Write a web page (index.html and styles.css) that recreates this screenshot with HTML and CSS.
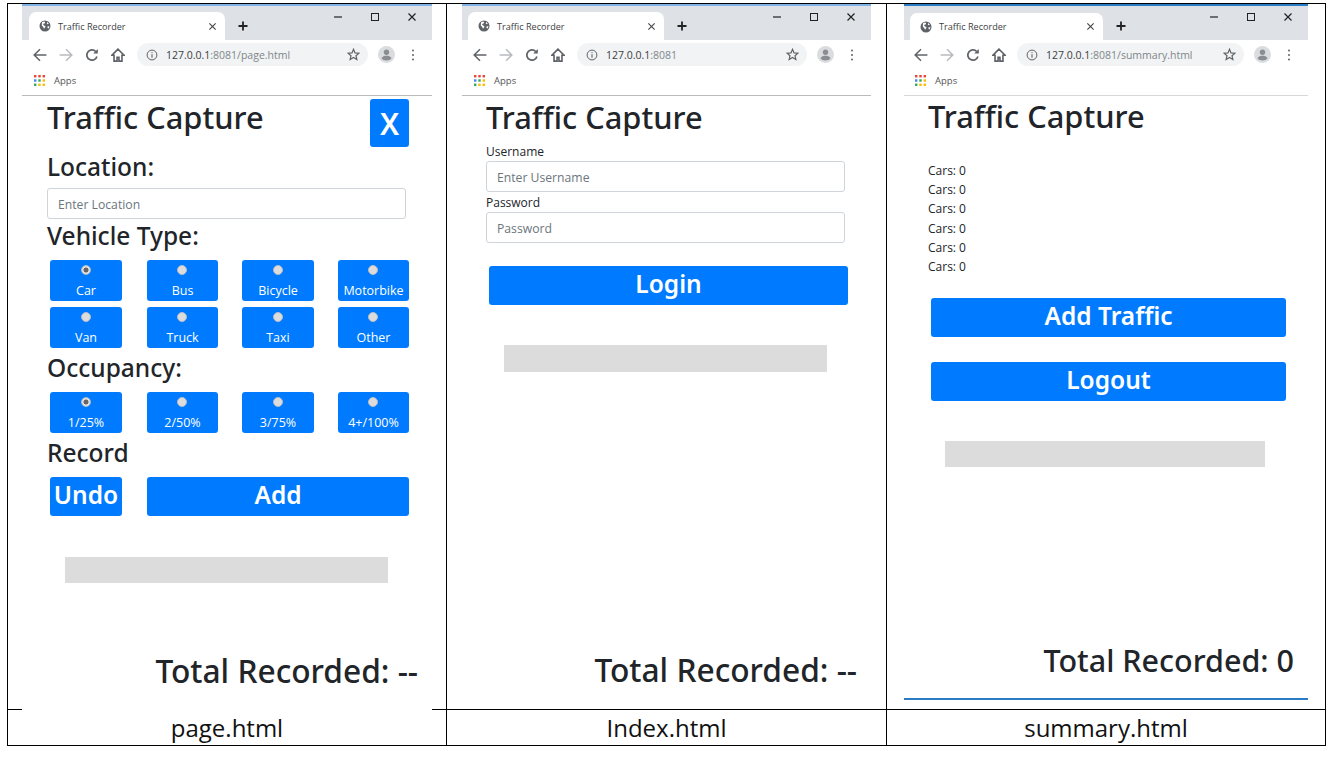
FILE: index.html
```html
<!DOCTYPE html>
<html lang="en">
<head>
<meta charset="utf-8">
<title>Traffic Recorder screens</title>
<link rel="stylesheet" href="styles.css">
</head>
<body>
<svg class="defs" aria-hidden="true">
  <symbol id="i-globe" viewBox="0 0 12 12"><circle cx="6" cy="6" r="5.500" fill="#5f6368"/><path d="M3 2.200l2-.7 1.200.6-.6 1.300-1.600.7.9 1.300 1.600.5-.5 1.700-1 1.100-.8-1.700-1.400-1.500zM8.300 2l1.500 1.700-1.200.6-.8-.9zM8.600 6.200l1.900.1-.8 2.300-1.200-.6z" fill="#fff"/></symbol>
  <symbol id="i-x" viewBox="0 0 10 10"><path d="M1.500 1.500l7 7M8.500 1.500l-7 7" fill="none" stroke="currentColor" stroke-width="1.200"/></symbol>
  <symbol id="i-plus" viewBox="0 0 10 10"><path d="M5 .5v9M.5 5h9" fill="none" stroke="currentColor" stroke-width="1.800"/></symbol>
  <symbol id="i-back" viewBox="0 0 12 12"><path d="M11.500 6H1.200M6 1L1 6l5 5" fill="none" stroke="currentColor" stroke-width="1.300"/></symbol>
  <symbol id="i-forward" viewBox="0 0 12 12"><path d="M.5 6h10.300M6 1l5 5-5 5" fill="none" stroke="currentColor" stroke-width="1.300"/></symbol>
  <symbol id="i-reload" viewBox="0 0 12 12"><path d="M10.200 7.200A4.400 4.400 0 1 1 9.200 3" fill="none" stroke="currentColor" stroke-width="1.500"/><path d="M11 .8v4H7z" fill="currentColor"/></symbol>
  <symbol id="i-home" viewBox="0 0 12 12"><path d="M6 1L.8 6.200h1.800v5h2.600V8h1.600v3.200h2.600v-5h1.800z" fill="none" stroke="currentColor" stroke-width="1.400"/></symbol>
  <symbol id="i-info" viewBox="0 0 12 12"><circle cx="6" cy="6" r="4.900" fill="none" stroke="currentColor" stroke-width="1"/><path d="M6 5.200v3.600M6 3.200v1" fill="none" stroke="currentColor" stroke-width="1.100"/></symbol>
  <symbol id="i-star" viewBox="0 0 12 12"><path d="M6 1.200l1.400 3.300 3.600.3-2.700 2.300.8 3.500L6 8.800l-3.100 1.800.8-3.500L1 4.800l3.600-.3z" fill="none" stroke="currentColor" stroke-width="1.100"/></symbol>
  <symbol id="i-avatar" viewBox="0 0 17 17"><circle cx="8.500" cy="8.500" r="8.500" fill="#dadce0"/><circle cx="8.500" cy="6.200" r="2.700" fill="#8a8d91"/><path d="M3.500 12.300c1-2 3-2.500 5-2.500s4 .5 5 2.500c-1 1.500-3 2.200-5 2.200s-4-.7-5-2.200z" fill="#8a8d91"/></symbol>
  <symbol id="i-dots" viewBox="0 0 4 12"><circle cx="2" cy="1.500" r="1" fill="#5f6368"/><circle cx="2" cy="6" r="1" fill="#5f6368"/><circle cx="2" cy="10.500" r="1" fill="#5f6368"/></symbol>
  <symbol id="i-apps" viewBox="0 0 11 11"><g><rect width="2.400" height="2.400" fill="#ea4335"/><rect x="4.300" width="2.400" height="2.400" fill="#ea4335"/><rect x="8.600" width="2.400" height="2.400" fill="#ea4335"/><rect y="4.300" width="2.400" height="2.400" fill="#4285f4"/><rect x="4.300" y="4.300" width="2.400" height="2.400" fill="#34a853"/><rect x="8.600" y="4.300" width="2.400" height="2.400" fill="#fbbc05"/><rect y="8.600" width="2.400" height="2.400" fill="#34a853"/><rect x="4.300" y="8.600" width="2.400" height="2.400" fill="#fbbc05"/><rect x="8.600" y="8.600" width="2.400" height="2.400" fill="#fbbc05"/></g></symbol>
  <symbol id="i-min" viewBox="0 0 10 10"><path d="M1 5h8" stroke="currentColor" stroke-width="1.200"/></symbol>
  <symbol id="i-max" viewBox="0 0 10 10"><rect x="1.500" y="1.500" width="7" height="7" fill="none" stroke="currentColor"/></symbol>
</svg>

<main class="sheet">
  <section class="cell cell-a">
    <div class="window win-a">
      <div class="tabstrip">
        <div class="tab"><svg class="ic-globe"><use href="#i-globe"/></svg><span class="tab-title">Traffic Recorder</span><svg class="ic-tabx"><use href="#i-x"/></svg></div>
        <svg class="ic-plus"><use href="#i-plus"/></svg>
        <div class="winctl"><svg class="ic-ctl"><use href="#i-min"/></svg><svg class="ic-ctl"><use href="#i-max"/></svg><svg class="ic-ctl"><use href="#i-x"/></svg></div>
      </div>
      <div class="toolbar">
        <svg class="ic-nav"><use href="#i-back"/></svg><svg class="ic-nav dim"><use href="#i-forward"/></svg><svg class="ic-nav"><use href="#i-reload"/></svg><svg class="ic-nav"><use href="#i-home"/></svg>
        <div class="omnibox"><svg class="ic-info"><use href="#i-info"/></svg><span class="url"><b>127.0.0.1</b>:8081/page.html</span><svg class="ic-star"><use href="#i-star"/></svg></div>
        <svg class="ic-avatar"><use href="#i-avatar"/></svg><svg class="ic-dots"><use href="#i-dots"/></svg>
      </div>
      <div class="bookmarks"><svg class="ic-apps"><use href="#i-apps"/></svg><span>Apps</span></div>
      <div class="page page-a">
        <header class="head">
          <h1 class="title">Traffic Capture</h1>
          <button class="btn btn-x">X</button>
        </header>
        <h2 class="sub sub-loc">Location:</h2>
        <input class="field field-loc" placeholder="Enter Location">
        <h2 class="sub sub-veh">Vehicle Type:</h2>
        <div class="choices">
          <label class="choice"><input class="radio" type="radio" name="veh" checked>Car</label>
          <label class="choice"><input class="radio" type="radio" name="veh">Bus</label>
          <label class="choice"><input class="radio" type="radio" name="veh">Bicycle</label>
          <label class="choice"><input class="radio" type="radio" name="veh">Motorbike</label>
          <label class="choice"><input class="radio" type="radio" name="veh">Van</label>
          <label class="choice"><input class="radio" type="radio" name="veh">Truck</label>
          <label class="choice"><input class="radio" type="radio" name="veh">Taxi</label>
          <label class="choice"><input class="radio" type="radio" name="veh">Other</label>
        </div>
        <h2 class="sub sub-occ">Occupancy:</h2>
        <div class="choices">
          <label class="choice"><input class="radio" type="radio" name="occ" checked>1/25%</label>
          <label class="choice"><input class="radio" type="radio" name="occ">2/50%</label>
          <label class="choice"><input class="radio" type="radio" name="occ">3/75%</label>
          <label class="choice"><input class="radio" type="radio" name="occ">4+/100%</label>
        </div>
        <h2 class="sub sub-rec">Record</h2>
        <div class="choices">
          <button class="btn btn-big">Undo</button>
          <button class="btn btn-big span3">Add</button>
        </div>
        <div class="ad ad-a"></div>
        <p class="total total-a">Total Recorded: --</p>
      </div>
    </div>
    <div class="caption">page.html</div>
  </section>

  <section class="cell cell-b">
    <div class="window win-b">
      <div class="tabstrip">
        <div class="tab"><svg class="ic-globe"><use href="#i-globe"/></svg><span class="tab-title">Traffic Recorder</span><svg class="ic-tabx"><use href="#i-x"/></svg></div>
        <svg class="ic-plus"><use href="#i-plus"/></svg>
        <div class="winctl"><svg class="ic-ctl"><use href="#i-min"/></svg><svg class="ic-ctl"><use href="#i-max"/></svg><svg class="ic-ctl"><use href="#i-x"/></svg></div>
      </div>
      <div class="toolbar">
        <svg class="ic-nav"><use href="#i-back"/></svg><svg class="ic-nav dim"><use href="#i-forward"/></svg><svg class="ic-nav"><use href="#i-reload"/></svg><svg class="ic-nav"><use href="#i-home"/></svg>
        <div class="omnibox"><svg class="ic-info"><use href="#i-info"/></svg><span class="url"><b>127.0.0.1</b>:8081</span><svg class="ic-star"><use href="#i-star"/></svg></div>
        <svg class="ic-avatar"><use href="#i-avatar"/></svg><svg class="ic-dots"><use href="#i-dots"/></svg>
      </div>
      <div class="bookmarks"><svg class="ic-apps"><use href="#i-apps"/></svg><span>Apps</span></div>
      <div class="page page-b">
        <h1 class="title">Traffic Capture</h1>
        <label class="lbl lbl-first" for="user">Username</label>
        <input class="field" id="user" placeholder="Enter Username">
        <label class="lbl" for="pass">Password</label>
        <input class="field" id="pass" placeholder="Password">
        <button class="btn btn-big btn-login">Login</button>
        <div class="ad ad-b"></div>
        <p class="total total-b">Total Recorded: --</p>
      </div>
    </div>
    <div class="caption">Index.html</div>
  </section>

  <section class="cell cell-c">
    <div class="window win-c">
      <div class="tabstrip">
        <div class="tab"><svg class="ic-globe"><use href="#i-globe"/></svg><span class="tab-title">Traffic Recorder</span><svg class="ic-tabx"><use href="#i-x"/></svg></div>
        <svg class="ic-plus"><use href="#i-plus"/></svg>
        <div class="winctl"><svg class="ic-ctl"><use href="#i-min"/></svg><svg class="ic-ctl"><use href="#i-max"/></svg><svg class="ic-ctl"><use href="#i-x"/></svg></div>
      </div>
      <div class="toolbar">
        <svg class="ic-nav"><use href="#i-back"/></svg><svg class="ic-nav dim"><use href="#i-forward"/></svg><svg class="ic-nav"><use href="#i-reload"/></svg><svg class="ic-nav"><use href="#i-home"/></svg>
        <div class="omnibox"><svg class="ic-info"><use href="#i-info"/></svg><span class="url"><b>127.0.0.1</b>:8081/summary.html</span><svg class="ic-star"><use href="#i-star"/></svg></div>
        <svg class="ic-avatar"><use href="#i-avatar"/></svg><svg class="ic-dots"><use href="#i-dots"/></svg>
      </div>
      <div class="bookmarks"><svg class="ic-apps"><use href="#i-apps"/></svg><span>Apps</span></div>
      <div class="page page-c">
        <h1 class="title">Traffic Capture</h1>
        <ul class="counts">
          <li>Cars: 0</li><li>Cars: 0</li><li>Cars: 0</li><li>Cars: 0</li><li>Cars: 0</li><li>Cars: 0</li>
        </ul>
        <button class="btn btn-big btn-wide btn-addt">Add Traffic</button>
        <button class="btn btn-big btn-wide btn-logout">Logout</button>
        <div class="ad ad-c"></div>
        <p class="total total-c">Total Recorded: 0</p>
      </div>
    </div>
    <div class="caption">summary.html</div>
  </section>
</main>
</body>
</html>
```
FILE: styles.css
```css
* { box-sizing: border-box; }
html, body { margin: 0; padding: 0; background: #fff; }
body { font-family: "Open Sans", "Noto Sans", sans-serif; color: #212529; height: 768px; overflow: hidden; }
.defs { width: 0; height: 0; display: block; }

.sheet {
  display: grid;
  grid-template-columns: 439px 440px 439px;
  width: 1319px;
  height: 743px;
  margin: 3px 0 0 7px;
  border-left: 1px solid #000;
  border-top: 1px solid #000;
}
.cell {
  display: flex;
  flex-direction: column;
  border-right: 1px solid #000;
  border-bottom: 1px solid #000;
}
.caption {
  flex: 1;
  border-top: 1px solid #000;
  text-align: center;
  font-size: 24px;
  line-height: 35px;
  color: #111;
}
.window {
  display: flex;
  flex-direction: column;
  background: #fff;
  position: relative;
  z-index: 1;
}
.win-a { width: 410px; margin: 0 0 -1px 14px; height: 706px; }
.win-b { width: 409px; margin-left: 15px; height: 705px; }
.win-c { width: 404px; margin: 0 0 9px 17px; height: 696px; border-bottom: 2px solid #2a7cc4; }

/* browser chrome */
.tabstrip {
  height: 36px;
  flex: none;
  display: flex;
  align-items: flex-end;
  background: #dee1e6;
  border-top: 2px solid #7fb2e5;
  padding-left: 7px;
  color: #222;
}
.win-b .tabstrip { padding-left: 6px; }
.win-c .tabstrip { padding-left: 6px; border-top-color: #2a7cc4; }
.tab {
  width: 196px;
  height: 28px;
  background: #fff;
  border-radius: 7px 7px 0 0;
  display: flex;
  align-items: center;
  padding: 0 8px 0 10px;
  font-size: 9.100px;
  color: #3c4043;
  flex: none;
}
.win-c .tab { width: 193px; height: 27px; }
.ic-globe { width: 12px; height: 12px; flex: none; }
.tab-title { margin-left: 7px; flex: 1; white-space: nowrap; }
.ic-tabx { width: 9px; height: 9px; color: #444; flex: none; }
.ic-plus { width: 10px; height: 10px; margin: 0 0 9px 13px; flex: none; }
.winctl {
  margin-left: auto;
  align-self: flex-start;
  display: flex;
  gap: 27px;
  padding: 6px 15px 0 0;
}
.ic-ctl { width: 10px; height: 10px; }

.toolbar {
  height: 29px;
  flex: none;
  display: flex;
  align-items: center;
  padding: 0 17px 0 11px;
  gap: 12px;
  color: #5f6368;
}
.win-c .toolbar { padding-left: 10px; }
.ic-nav { width: 14px; height: 14px; flex: none; color: #5f6368; }
.ic-nav.dim { color: #b9bbbe; }
.omnibox {
  flex: 1;
  height: 23px;
  margin-right: -2px;
  background: #f1f3f4;
  border-radius: 12px;
  display: flex;
  align-items: center;
  padding: 0 8px 0 9px;
  min-width: 0;
}
.win-c .omnibox { margin-left: -1px; }
.ic-info { width: 12px; height: 12px; flex: none; color: #5f6368; }
.url { margin-left: 8px; flex: 1; font-size: 10.500px; color: #80868b; white-space: nowrap; }
.url b { font-weight: 400; color: #3c4043; }
.ic-star { width: 13px; height: 13px; flex: none; color: #5f6368; }
.ic-avatar { width: 17px; height: 17px; flex: none; }
.ic-dots { width: 4px; height: 12px; flex: none; margin-left: 4px; }

.bookmarks {
  height: 27px;
  flex: none;
  display: flex;
  align-items: center;
  padding: 0 0 4px 12px;
  font-size: 9.500px;
  color: #555;
  border-bottom: 1px solid #bbb;
}
.win-c .bookmarks { border-bottom-color: #d8d8d8; padding-left: 11px; }
.ic-apps { width: 11px; height: 11px; margin-right: 9px; }

/* page content */
.page { flex: 1; display: flex; flex-direction: column; min-height: 0; }
.page-a { padding: 3px 23px 0 25px; }
.page-b { padding: 3px 0 0 24px; }
.page-c { padding: 2px 0 0 24px; }
.title {
  margin: 0;
  font-family: "Noto Sans", "Open Sans", sans-serif;
  font-size: 30.800px;
  font-weight: 500;
  line-height: 36px;
  padding-bottom: 2px;
  white-space: nowrap;
}
.head { display: flex; justify-content: space-between; align-items: flex-start; height: 48px; flex: none; }
.sub {
  margin: 0;
  font-family: "Noto Sans", "Open Sans", sans-serif;
  font-size: 24.500px;
  font-weight: 500;
  line-height: 27px;
  padding-bottom: 2px;
}
.sub-loc { margin-top: 6px; }
.sub-veh { margin-top: 3px; }
.sub-occ { margin-top: 6px; }
.sub-rec { margin-top: 6px; }

.field {
  display: block;
  width: 359px;
  height: 31px;
  flex: none;
  padding: 2px 10px 0;
  border: 1px solid #ced4da;
  border-radius: 3px;
  background: #fff;
  font: 12.200px "Open Sans", "Noto Sans", sans-serif;
  color: #495057;
}
.field::placeholder { color: #6c757d; opacity: 1; }
.field-loc { margin-top: 6px; }

.btn {
  border: 0;
  border-radius: 3px;
  background: #007bff;
  color: #fff;
  font-family: "Noto Sans", "Open Sans", sans-serif;
  padding: 0;
  flex: none;
}
.btn-x { width: 39px; height: 48px; font-size: 30px; font-weight: 600; }
.btn-big { height: 39px; font-size: 24.500px; font-weight: 600; padding-bottom: 4px; }

.choices {
  display: grid;
  grid-template-columns: 73px 71px 72px 71px;
  column-gap: 24px;
  row-gap: 6px;
  margin: 9px 0 0 3px;
  flex: none;
}
.choices > :nth-child(4n+1) { margin-right: 1px; }
.choice {
  height: 41px;
  border-radius: 3px;
  background: #007bff;
  color: #fff;
  font-size: 12.500px;
  line-height: 16px;
  display: flex;
  flex-direction: column;
  align-items: center;
  padding-top: 5px;
}
.radio {
  appearance: none;
  width: 10px;
  height: 10px;
  margin: 0 1px 8px 0;
  border-radius: 50%;
  background: #dcdcdc;
  border: 1px solid #b5bcc6;
  flex: none;
}
.radio:checked { background: radial-gradient(circle, #666 0 2.200px, #e0e0e0 2.800px); }
.span3 { grid-column: span 3; }

.lbl { font-size: 12px; line-height: 18px; padding-top: 2px; display: block; }
.lbl-first { margin-top: 4px; }

.ad { height: 26px; background: #dcdcdc; flex: none; }
.ad-a { width: 323px; margin: 41px 0 0 18px; }
.ad-b { width: 323px; margin: 40px 0 0 18px; height: 27px; }
.ad-c { width: 320px; margin: 40px 0 0 17px; }

.btn-login { width: 359px; margin: 23px 0 0 3px; }
.btn-wide { width: 355px; margin-left: 3px; }
.btn-addt { margin-top: 22px; }
.btn-logout { margin-top: 25px; }

.counts { list-style: none; margin: 25px 0 0; padding: 0; font-size: 12px; line-height: 19.200px; }

.total {
  margin: auto 0 0;
  font-family: "Noto Sans", "Open Sans", sans-serif;
  font-size: 31.700px;
  font-weight: 500;
  line-height: 38px;
  white-space: nowrap;
  text-align: right;
  flex: none;
}
.total-a { margin-right: -9px; padding-bottom: 20px; }
.total-b { padding-right: 14px; padding-bottom: 20px; }
.total-c { padding-right: 14px; padding-bottom: 19px; font-size: 30.500px; }
```
